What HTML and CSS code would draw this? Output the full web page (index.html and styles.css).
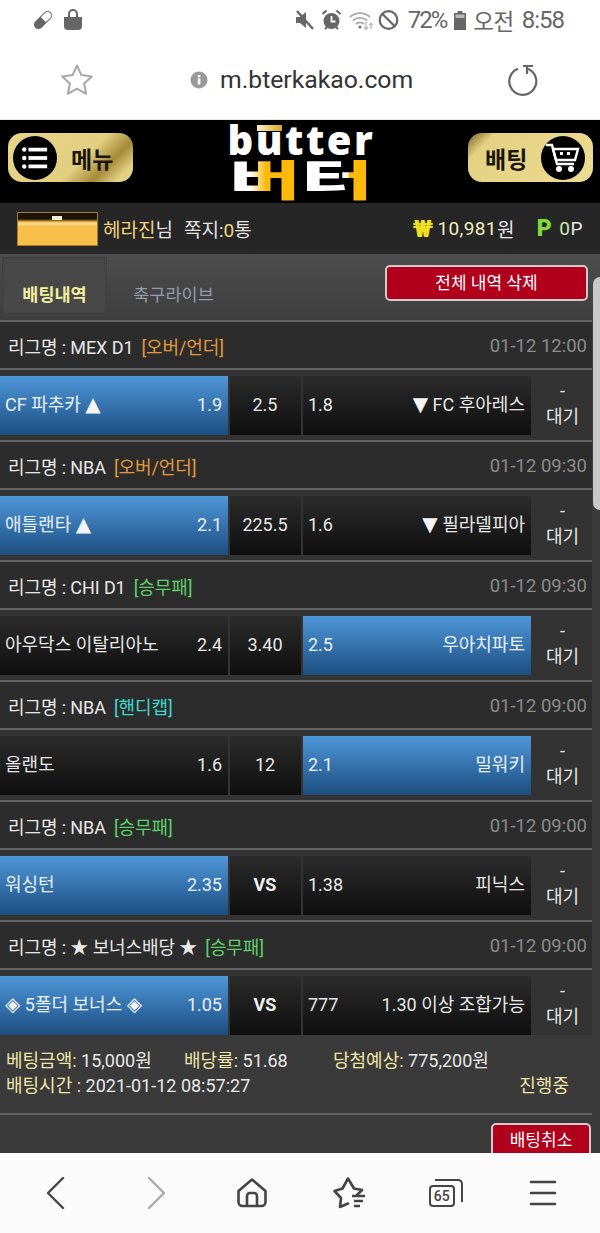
FILE: index.html
```html
<!DOCTYPE html>
<html lang="ko">
<head>
  <meta charset="UTF-8">
  <title>m.bterkakao.com</title>
  <link rel="stylesheet" href="styles.css">
</head>
<body>
<div class="phone">

  <div class="status-bar">
    <div class="status-left">
      <svg width="22" height="22" viewBox="0 0 22 22"><g transform="rotate(-45 11 11)"><rect x="0" y="6.500" width="22" height="9" rx="4.500" fill="#666"/><path d="M11.500 7.500h6a3.500 3.500 0 0 1 0 7h-6z" fill="#fff"/></g></svg>
      <svg width="20" height="22" viewBox="0 0 20 22"><path d="M1 8h18v9a4 4 0 0 1-4 4H5a4 4 0 0 1-4-4z" fill="#666"/><path d="M6 10V5a4 4 0 0 1 8 0v5" fill="none" stroke="#666" stroke-width="2"/></svg>
    </div>
    <div class="status-right">
      <svg width="20" height="22" viewBox="0 0 20 22"><path d="M1 8h4l6-5v16l-6-5H1z" fill="#666"/><path d="M2 2l16 18" stroke="#666" stroke-width="2.400"/></svg>
      <svg class="ic-alarm" width="21" height="22" viewBox="0 0 21 22"><circle cx="10.500" cy="12" r="8" fill="#666"/><path d="M10.500 7v5.500h4" fill="none" stroke="#fff" stroke-width="1.800"/><path d="M1.500 5l4-3.500M19.500 5l-4-3.500M4 20l2-2M17 20l-2-2" stroke="#666" stroke-width="2"/></svg>
      <svg class="ic-wifi" width="26" height="22" viewBox="0 0 26 22"><path d="M1 8a15 15 0 0 1 20 0M4 11.500a10.500 10.500 0 0 1 14 0M7 15a6 6 0 0 1 8 0" fill="none" stroke="#aaa" stroke-width="1.800"/><circle cx="11" cy="18" r="1.600" fill="#777"/><path d="M17 13v7M15 18l2 2.500 2-2.500M22 20v-6M20.500 16l1.500-2 1.500 2" fill="none" stroke="#bbb" stroke-width="1.300"/></svg>
      <svg class="ic-block" width="21" height="22" viewBox="0 0 21 22"><circle cx="10.500" cy="11" r="8.800" fill="none" stroke="#666" stroke-width="2.200"/><path d="M4.500 5l12 12" stroke="#666" stroke-width="2.200"/></svg>
      <span class="status-pct">72%</span>
      <svg width="14" height="22" viewBox="0 0 14 22"><path d="M4.500 2h5v2h3.500v17H1V4h3.500z" fill="#666"/><rect x="2.500" y="5.500" width="9" height="3.500" fill="#bbb"/></svg>
      <span class="status-time">오전</span>
      <span class="status-clock">8:58</span>
    </div>
  </div>

  <div class="address-bar">
    <svg class="addr-star" width="36" height="36" viewBox="0 0 36 36"><path d="M18 3.500l4.400 9.600 10.400 1.300-7.700 7.100 2 10.300-9.100-5.100-9.100 5.100 2-10.300-7.700-7.100 10.400-1.300z" fill="none" stroke="#a8a8a8" stroke-width="2" stroke-linejoin="round"/></svg>
    <div class="addr-url">
      <svg width="18" height="18" viewBox="0 0 18 18"><circle cx="9" cy="9" r="8.500" fill="#999"/><rect x="7.800" y="7.500" width="2.600" height="6" fill="#fff"/><rect x="7.800" y="4" width="2.600" height="2.400" fill="#fff"/></svg>
      <span>m.bterkakao.com</span>
    </div>
    <svg class="addr-reload" width="34" height="36" viewBox="0 0 34 36"><path d="M21 6.500a13.500 13.500 0 1 1-9 .2" fill="none" stroke="#666" stroke-width="2.200"/><path d="M17 4h10M21 4v8" fill="none" stroke="#666" stroke-width="2.200"/></svg>
  </div>

  <div class="page">
    <div class="top-bar">
      <div class="gold-btn gold-btn-left">
        <span class="gold-circle">
          <svg width="28" height="28" viewBox="0 0 30 30"><g fill="#fff"><circle cx="3.500" cy="6" r="2.400"/><circle cx="3.500" cy="15" r="2.400"/><circle cx="3.500" cy="24" r="2.400"/><rect x="8" y="4" width="20" height="4"/><rect x="8" y="13" width="20" height="4"/><rect x="8" y="22" width="20" height="4"/></g></svg>
        </span>
        <span class="gold-label">메뉴</span>
      </div>
      <div class="logo">
        <div class="logo-en">b<span class="logo-u">u</span>tter</div>
        <div class="logo-ko">버터</div>
      </div>
      <div class="gold-btn gold-btn-right">
        <span class="gold-label">배팅</span>
        <span class="gold-circle">
          <svg width="36" height="34" viewBox="0 0 36 34"><path d="M1 4h6l5 19h17" fill="none" stroke="#fff" stroke-width="2.400"/><path d="M8 8h25l-3 11H11z" fill="none" stroke="#fff" stroke-width="2.400"/><rect x="15" y="11" width="3" height="3" fill="#fff"/><rect x="22" y="11" width="3" height="3" fill="#fff"/><circle cx="14" cy="28" r="3" fill="#fff"/><circle cx="26" cy="28" r="3" fill="#fff"/></svg>
        </span>
      </div>
    </div>

    <div class="user-bar">
      <div class="avatar"></div>
      <span class="user-name">헤라진<em>님</em></span>
      <span class="user-note">쪽지:<b>0</b>통</span>
      <span class="user-money"><i class="won">₩</i>10,981<em>원</em></span>
      <span class="user-point"><i class="pt">P</i>0<em>P</em></span>
    </div>

    <div class="tabs">
      <div class="tab tab-active">배팅내역</div>
      <div class="tab tab-live">축구라이브</div>
      <div class="del-all">전체 내역 삭제</div>
    </div>

    <div class="bet-group">
      <div class="league"><span>리그명 : MEX D1</span><span class="tag-orange">[오버/언더]</span><span class="league-time">01-12 12:00</span></div>
      <div class="match">
        <div class="cell cell-home cell-on"><span>CF 파추카 <i class="arrow">▲</i></span><span>1.9</span></div>
        <div class="cell cell-mid">2.5</div>
        <div class="cell cell-away"><span>1.8</span><span><i class="arrow">▼</i> FC 후아레스</span></div>
        <div class="cell-state">-<br>대기</div>
      </div>
    </div>

    <div class="bet-group">
      <div class="league"><span>리그명 : NBA</span><span class="tag-orange">[오버/언더]</span><span class="league-time">01-12 09:30</span></div>
      <div class="match">
        <div class="cell cell-home cell-on"><span>애틀랜타 <i class="arrow">▲</i></span><span>2.1</span></div>
        <div class="cell cell-mid">225.5</div>
        <div class="cell cell-away"><span>1.6</span><span><i class="arrow">▼</i> 필라델피아</span></div>
        <div class="cell-state">-<br>대기</div>
      </div>
    </div>

    <div class="bet-group">
      <div class="league"><span>리그명 : CHI D1</span><span class="tag-green">[승무패]</span><span class="league-time">01-12 09:30</span></div>
      <div class="match">
        <div class="cell cell-home"><span>아우닥스 이탈리아노</span><span>2.4</span></div>
        <div class="cell cell-mid">3.40</div>
        <div class="cell cell-away cell-on"><span>2.5</span><span>우아치파토</span></div>
        <div class="cell-state">-<br>대기</div>
      </div>
    </div>

    <div class="bet-group">
      <div class="league"><span>리그명 : NBA</span><span class="tag-cyan">[핸디캡]</span><span class="league-time">01-12 09:00</span></div>
      <div class="match">
        <div class="cell cell-home"><span>올랜도</span><span>1.6</span></div>
        <div class="cell cell-mid">12</div>
        <div class="cell cell-away cell-on"><span>2.1</span><span>밀워키</span></div>
        <div class="cell-state">-<br>대기</div>
      </div>
    </div>

    <div class="bet-group">
      <div class="league"><span>리그명 : NBA</span><span class="tag-green">[승무패]</span><span class="league-time">01-12 09:00</span></div>
      <div class="match">
        <div class="cell cell-home cell-on"><span>워싱턴</span><span>2.35</span></div>
        <div class="cell cell-mid cell-vs">VS</div>
        <div class="cell cell-away"><span>1.38</span><span>피닉스</span></div>
        <div class="cell-state">-<br>대기</div>
      </div>
    </div>

    <div class="bet-group">
      <div class="league"><span>리그명 : ★ 보너스배당 ★</span><span class="tag-green">[승무패]</span><span class="league-time">01-12 09:00</span></div>
      <div class="match match-last">
        <div class="cell cell-home cell-on"><span><i class="arrow">◈</i> 5폴더 보너스 <i class="arrow">◈</i></span><span>1.05</span></div>
        <div class="cell cell-mid cell-vs">VS</div>
        <div class="cell cell-away"><span>777</span><span>1.30 이상 조합가능</span></div>
        <div class="cell-state">-<br>대기</div>
      </div>
    </div>

    <div class="summary">
      <div class="summary-row">
        <span class="sum-amount"><b>베팅금액:</b> 15,000원</span>
        <span class="sum-rate"><b>배당률:</b> 51.68</span>
        <span><b>당첨예상:</b> 775,200원</span>
      </div>
      <div class="summary-row summary-time">
        <span><b>배팅시간 :</b> 2021-01-12 08:57:27</span>
        <b class="sum-state">진행중</b>
      </div>
    </div>
    <div class="cancel-row"><div class="cancel-btn">배팅취소</div></div>

    <div class="scroll-thumb"></div>
  </div>

  <div class="nav-bar">
    <svg width="22" height="34" viewBox="0 0 22 34"><path d="M18 2L3 17l15 15" fill="none" stroke="#444" stroke-width="2.400" stroke-linecap="round" stroke-linejoin="round"/></svg>
    <svg class="nav-forward" width="22" height="34" viewBox="0 0 22 34"><path d="M4 2l15 15L4 32" fill="none" stroke="#aaa" stroke-width="2.400" stroke-linecap="round" stroke-linejoin="round"/></svg>
    <svg class="nav-home" width="30" height="30" viewBox="0 0 30 30"><path d="M1.500 13L15 1.500 28.500 13v11a4 4 0 0 1-4 4h-19a4 4 0 0 1-4-4z" fill="none" stroke="#444" stroke-width="2.600" stroke-linejoin="round"/><path d="M10 27v-9a3 3 0 0 1 3-3h4a3 3 0 0 1 3 3v9" fill="none" stroke="#444" stroke-width="2.600"/></svg>
    <svg class="nav-star" width="33" height="32" viewBox="0 0 33 32"><path d="M29 13l-8-1.500L15 1.500 9.500 11.500 1.500 14 8 21l-1 9 8-3.500M29 13l-5 5" fill="none" stroke="#444" stroke-width="2.600" stroke-linecap="round" stroke-linejoin="round"/><path d="M19 19h13M21 24h9M21 29h6" stroke="#444" stroke-width="2.400"/></svg>
    <div class="nav-tabs">
      <span class="nav-count">65</span>
    </div>
    <svg width="28" height="28" viewBox="0 0 28 28"><path d="M2 3h24M2 14h24M2 25h24" stroke="#444" stroke-width="2.600" stroke-linecap="round"/></svg>
  </div>

</div>
</body>
</html>
```

FILE: styles.css
```css
* {
  box-sizing: border-box;
}
html, body {
  margin: 0;
  padding: 0;
}
body {
  font-family: Roboto, "Noto Sans CJK KR", sans-serif;
  background: #fff;
}
em, i {
  font-style: normal;
}
.phone {
  width: 600px;
  height: 1233px;
  display: flex;
  flex-direction: column;
  overflow: hidden;
}

/* status bar */
.status-bar {
  height: 40px;
  padding: 0 36px 0 32px;
  display: flex;
  align-items: center;
  justify-content: space-between;
  color: #666;
  background: #fff;
}
.status-left {
  display: flex;
  align-items: center;
  gap: 9px;
}
.status-right {
  display: flex;
  align-items: center;
  gap: 6px;
  font-size: 24px;
}
.status-pct {
  letter-spacing: -2px;
  margin: 0 1px 0 3px;
}
.status-time {
  font-size: 22.500px;
  letter-spacing: -.5px;
}
.status-clock {
  margin-left: 2px;
  letter-spacing: -1px;
}
.ic-wifi {
  margin-left: 1px;
}
.ic-block {
  margin-left: -3px;
}

/* address bar */
.address-bar {
  height: 80px;
  display: flex;
  align-items: center;
  padding-left: 59px;
  border-bottom: 1px solid #e8e8e8;
  background: #fff;
}
.addr-url {
  margin-left: 95px;
  display: flex;
  align-items: center;
  gap: 12px;
  font-size: 24.750px;
  color: #333;
}
.addr-reload {
  margin-left: 93px;
}

/* page */
.page {
  flex: 1;
  min-height: 0;
  position: relative;
  background: #3a3a3a;
  color: #e8e8e8;
  font-size: 18px;
}
.top-bar {
  height: 83px;
  background: #000;
  padding: 13px 7px 0 8px;
  display: flex;
  align-items: flex-start;
  justify-content: space-between;
}
.gold-btn {
  width: 125px;
  height: 49px;
  border-radius: 14px;
  display: flex;
  align-items: center;
  gap: 14px;
  color: #1a1408;
  font-size: 23px;
  font-weight: 700;
}
.gold-btn-left {
  padding-left: 5px;
  background: linear-gradient(135deg, #e6d68a 0%, #e2cf80 58%, #a58a38 76%, #e3d184 90%);
}
.gold-btn-right {
  padding-left: 17px;
  gap: 14px;
  background: linear-gradient(135deg, #7c5c1c 0%, #e4d283 16%, #ecdc92 100%);
}
.gold-circle {
  width: 44px;
  height: 44px;
  border-radius: 50%;
  background: #000;
  display: flex;
  align-items: center;
  justify-content: center;
  flex: none;
}
.logo {
  width: 146px;
  margin-top: -13px;
  text-align: center;
}
.logo-en {
  height: 40px;
  font-family: "Open Sans", sans-serif;
  font-size: 40px;
  font-weight: 800;
  line-height: 40px;
  letter-spacing: 2.500px;
  white-space: nowrap;
  color: #fff;
}
.logo-u {
  position: relative;
}
.logo-u::before {
  content: "";
  position: absolute;
  left: 1px;
  right: 3px;
  top: 13px;
  height: 6px;
  background: linear-gradient(90deg, #fff2c0, #d9a820);
}
.logo-ko {
  height: 43px;
  width: 82px;
  margin: 0 auto;
  font-size: 44px;
  font-weight: 900;
  line-height: 43px;
  white-space: nowrap;
  transform: scaleX(1.780);
  background: linear-gradient(90deg, #fff 0%, #fff 15%, #fdb90a 26%, #fdb90a 50%, #fff 51%, #fff 82%, #fdb90a 83%);
  -webkit-background-clip: text;
  background-clip: text;
  color: transparent;
}

/* user bar */
.user-bar {
  height: 51px;
  background: #262626;
  padding: 0 17px;
  display: flex;
  align-items: center;
  font-size: 19px;
  color: #e4e4e4;
}
.avatar {
  width: 81px;
  height: 34px;
  margin-right: 5px;
  position: relative;
  background: linear-gradient(#1c1408 0, #1c1408 6px, #f6c04c 9px, #fbe0a0 11px, #f8c04a 13px, #f8c04a 100%);
  border: 1px solid #a57b2c;
}
.avatar::after {
  content: "";
  position: absolute;
  left: 34px;
  top: 3px;
  width: 10px;
  height: 4px;
  background: #f4ecd8;
}
.user-name {
  color: #f4d27c;
}
.user-name em {
  color: #e4e4e4;
}
.user-note {
  margin-left: 11px;
}
.user-note b {
  font-weight: 400;
  color: #f4d27c;
}
.user-money {
  margin-left: auto;
  color: #f3ecc0;
  letter-spacing: .4px;
  display: flex;
  align-items: center;
}
.user-money em {
  color: #e8e8e8;
}
.won {
  font-size: 24px;
  line-height: 20px;
  font-weight: 900;
  color: #f0e020;
  margin-right: 4px;
}
.user-point {
  margin-left: 22px;
  color: #cfeaa8;
  letter-spacing: .5px;
  display: flex;
  align-items: center;
}
.user-point em {
  color: #e8e8e8;
}
.pt {
  font-size: 23px;
  line-height: 20px;
  font-weight: 900;
  color: #7fdc3c;
  margin-right: 7px;
}

/* tabs */
.tabs {
  height: 66px;
  padding-top: 3px;
  display: flex;
  position: relative;
  background: linear-gradient(#4d4d4d, #3e3e3e);
}
.tab {
  width: 105px;
  height: 57px;
  padding-top: 27px;
  font-size: 17.500px;
  line-height: 22px;
  text-align: center;
  margin-left: 2px;
  color: #8f9bb0;
}
.tab-active {
  background: #484848;
  color: #f2f0a0;
  font-weight: 700;
  box-shadow: inset 0 0 3px #333;
}
.tab-live {
  padding-left: 24px;
  white-space: nowrap;
}
.del-all {
  position: absolute;
  left: 385px;
  top: 11px;
  width: 203px;
  height: 36px;
  border: 2px solid #ccc;
  border-radius: 5px;
  background: #b0001c;
  color: #fff;
  font-size: 17px;
  line-height: 32px;
  text-align: center;
}

/* bet rows */
.bet-group {
  margin-right: 8px;
  border-top: 2px solid #636363;
  background: #333;
}
.league {
  height: 48px;
  padding: 1px 5px 0 8px;
  display: flex;
  align-items: center;
  gap: 8px;
  letter-spacing: -.1px;
  background: #2c2c2c;
  border-bottom: 2px solid #636363;
}
.league-time {
  margin-left: auto;
  font-size: 18.500px;
  letter-spacing: 0;
  color: #8c8c8c;
}
.tag-orange {
  color: #e39a3c;
}
.tag-green {
  color: #5fd06a;
}
.tag-cyan {
  color: #3fd8d0;
}
.match {
  height: 70px;
  padding: 6px 0 5px;
  display: flex;
}
.match-last {
  height: 65px;
  padding-bottom: 0;
}
.cell {
  display: flex;
  align-items: center;
  justify-content: space-between;
  padding: 0 6px 2px 5px;
  background: linear-gradient(#2c2c2c, #0e0e0e);
  color: #e8e8e8;
  height: 59px;
  line-height: 24px;
}
.cell-on {
  background: linear-gradient(#4f97da, #1c4e80);
  color: #e8f0f8;
}
.cell-home {
  width: 228px;
}
.cell-mid {
  width: 71px;
  margin-left: 2px;
  justify-content: center;
}
.cell-vs {
  font-weight: 700;
  color: #f0f0f0;
}
.cell-away {
  width: 228px;
  margin-left: 2px;
}
.cell-state {
  flex: 1;
  padding: 2px 0 0 2px;
  text-align: center;
  line-height: 26px;
  color: #e8e8e8;
}
.arrow {
  font-family: "DejaVu Sans", sans-serif;
  font-size: 20px;
  line-height: 0;
  color: #f4f4f4;
}

/* summary */
.summary {
  margin-right: 8px;
  height: 80px;
  padding: 13px 0 0 6px;
  line-height: 25px;
  border-bottom: 2px solid #636363;
}
.summary-row {
  display: flex;
}
.summary b {
  font-weight: 400;
  color: #efe6a8;
}
.sum-amount {
  width: 178px;
}
.sum-rate {
  width: 149px;
}
.summary-time {
  justify-content: space-between;
  padding-right: 23px;
}
.cancel-row {
  padding: 8px 9px 0 0;
  display: flex;
  justify-content: flex-end;
}
.cancel-btn {
  width: 100px;
  height: 40px;
  padding-top: 4px;
  border: 2px solid #ccc;
  border-radius: 5px;
  background: #b0001c;
  color: #fff;
  font-size: 17px;
  line-height: 22px;
  text-align: center;
}
.scroll-thumb {
  position: absolute;
  right: 0;
  top: 157px;
  width: 7px;
  height: 233px;
  background: #c8c8c8;
  border-radius: 7px 0 0 7px;
}

/* bottom nav */
.nav-bar {
  height: 80px;
  flex: none;
  position: relative;
  background: #fbfbfb;
  display: grid;
  grid-template-columns: repeat(6, 1fr);
  justify-items: center;
  align-items: center;
  padding: 0 8px 0 7px;
}
.nav-forward {
  margin-left: 6px;
}
.nav-home {
  margin-left: 2px;
}
.nav-star {
  margin-left: 2px;
}
.nav-tabs {
  width: 26px;
  height: 22px;
  margin: 6px 0 0 -8px;
  border: 2.500px solid #444;
  border-radius: 4px;
  position: relative;
  display: flex;
  align-items: center;
  justify-content: center;
}
.nav-tabs::after {
  content: "";
  position: absolute;
  left: 4px;
  top: -8px;
  width: 26px;
  height: 21px;
  border: 2.500px solid #444;
  border-left: 0;
  border-bottom: 0;
  border-radius: 0 5px 0 0;
}
.nav-count {
  font-size: 14px;
  font-weight: 500;
  line-height: 16px;
  color: #444;
}
```
